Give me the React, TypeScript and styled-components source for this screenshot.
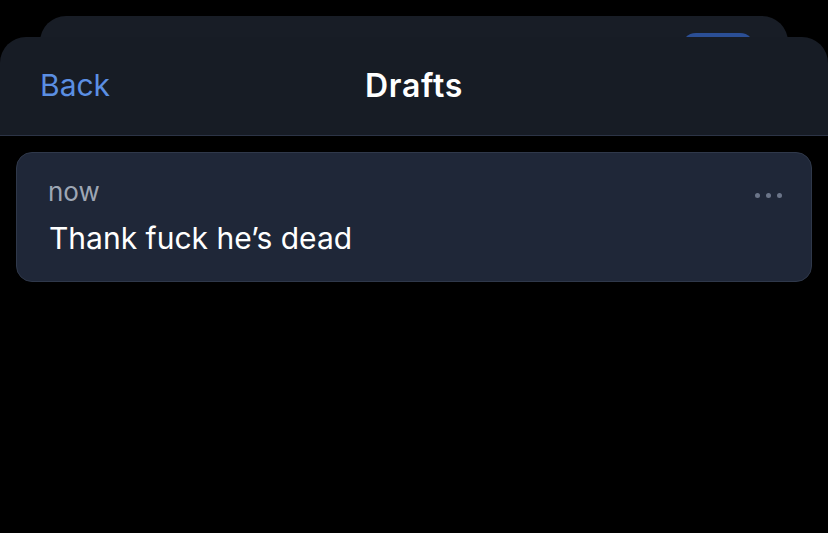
import React from 'react';
import styled, { createGlobalStyle } from 'styled-components';

const GlobalStyle = createGlobalStyle`
  html, body {
    margin: 0;
    padding: 0;
    background: #000000;
  }
  body {
    font-family: Inter, 'Noto Sans', sans-serif;
    -webkit-font-smoothing: antialiased;
  }
`;

const Screen = styled.div`
  position: relative;
  width: 828px;
  height: 533px;
  background: #000000;
  padding-top: 37px;
  box-sizing: border-box;
  overflow: hidden;
`;

// the sheet underneath, peeking above the modal
const BackSheet = styled.div`
  position: absolute;
  top: 16px;
  left: 40px;
  right: 40px;
  height: 80px;
  background: #181d26;
  border-radius: 26px 26px 0 0;
`;

const BackPill = styled.div`
  position: absolute;
  top: 17px;
  right: 33px;
  width: 74px;
  height: 30px;
  border-radius: 15px;
  background: #2b4f96;
`;

const Sheet = styled.div`
  position: relative;
  display: flex;
  flex-direction: column;
`;

const Header = styled.header`
  height: 99px;
  box-sizing: border-box;
  padding: 29px 0 0;
  display: grid;
  grid-template-columns: 1fr auto 1fr;
  align-items: start;
  background: #171c25;
  border-radius: 26px 26px 0 0;
  border-bottom: 1px solid #2c3446;
`;

const BackButton = styled.button`
  justify-self: start;
  margin: 1px 0 0 40px;
  background: none;
  border: none;
  padding: 0;
  font-family: Inter, 'Noto Sans', sans-serif;
  font-size: 30px;
  line-height: 36px;
  font-weight: 400;
  color: #5b8fe3;
`;

const Title = styled.h1`
  margin: 2px 0 0;
  font-size: 32px;
  line-height: 36px;
  font-weight: 600;
  color: #ffffff;
  letter-spacing: 0.7px;
`;

const List = styled.div`
  padding: 16px 16px;
  display: flex;
  flex-direction: column;
  gap: 12px;
`;

const DraftCard = styled.div`
  position: relative;
  height: 130px;
  box-sizing: border-box;
  background: #1f2738;
  border: 1px solid #2f384a;
  border-radius: 16px;
  padding: 23px 30px 0 31px;
`;

const Time = styled.div`
  font-size: 26px;
  font-weight: 400;
  color: #9ea6b4;
  line-height: 32px;
`;

const Body = styled.div`
  margin-top: 12px;
  margin-left: 1px;
  font-size: 30px;
  font-weight: 400;
  color: #ffffff;
  line-height: 36px;
`;

const MoreButton = styled.div`
  position: absolute;
  top: 40px;
  right: 29px;
  display: flex;
  gap: 6px;
`;

const Dot = styled.span`
  width: 5px;
  height: 5px;
  border-radius: 50%;
  background: #6b7589;
`;

const App: React.FC = () => {
  const drafts = [{ id: 1, time: 'now', text: 'Thank fuck he’s dead' }];

  return (
    <>
      <GlobalStyle />
      <Screen>
        <BackSheet>
          <BackPill />
        </BackSheet>
        <Sheet>
          <Header>
            <BackButton>Back</BackButton>
            <Title>Drafts</Title>
            <span />
          </Header>
          <List>
            {drafts.map((draft) => (
              <DraftCard key={draft.id}>
                <Time>{draft.time}</Time>
                <Body>{draft.text}</Body>
                <MoreButton>
                  <Dot />
                  <Dot />
                  <Dot />
                </MoreButton>
              </DraftCard>
            ))}
          </List>
        </Sheet>
      </Screen>
    </>
  );
};

export default App;
